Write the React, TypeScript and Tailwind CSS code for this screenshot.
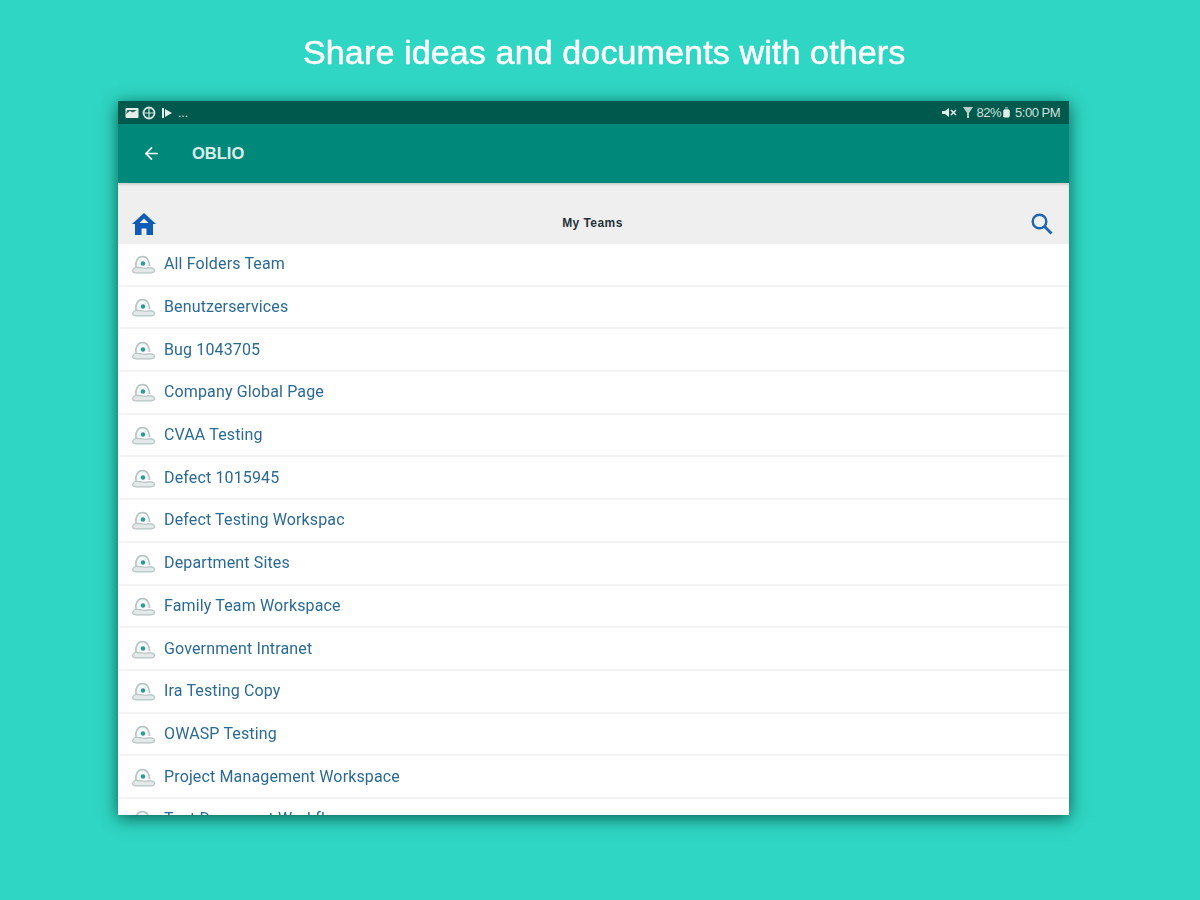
import { ArrowLeft, BatteryFull } from 'lucide-react';

const TEAMS = [
  'All Folders Team',
  'Benutzerservices',
  'Bug 1043705',
  'Company Global Page',
  'CVAA Testing',
  'Defect 1015945',
  'Defect Testing Workspac',
  'Department Sites',
  'Family Team Workspace',
  'Government Intranet',
  'Ira Testing Copy',
  'OWASP Testing',
  'Project Management Workspace',
  'Test Document Workflow',
];

function TeamIcon() {
  return (
    <svg width="26" height="22" viewBox="0 0 26 22" fill="none" className="shrink-0">
      <path d="M6 14 C5 8 8 3.500 12.500 3.500 C17 3.500 19.500 8 19.500 13" stroke="#b7c3c4" strokeWidth="1.600" fill="#f4f7f7" />
      <path d="M3 16.500 C5 13.500 7 14.500 13 15 C18 15.500 22 13.500 24 16 C25.500 18.500 23.500 19.800 21 19.800 L6 19.800 C3 19.800 2 18.500 3 16.500 Z" fill="#e3e8e8" stroke="#b7c3c4" strokeWidth="1.200" />
      <circle cx="13" cy="10.500" r="2.200" fill="#2f9a8f" />
    </svg>
  );
}

function HomeIcon() {
  return (
    <svg width="24" height="22" viewBox="0 0 24 22" className="shrink-0">
      <path fillRule="evenodd" d="M12 0 L24 11 L21 11 L21 22 L14.500 22 L14.500 15.500 L9.500 15.500 L9.500 22 L3 22 L3 11 L0 11 Z M12 5.500 L7.500 10 L16.500 10 Z" fill="#0f5bb5" />
    </svg>
  );
}

function SearchIcon() {
  return (
    <svg width="22" height="22" viewBox="0 0 22 22" fill="none" className="shrink-0">
      <circle cx="8.500" cy="8.500" r="6.800" stroke="#1f66b0" strokeWidth="2.400" />
      <path d="M13.500 13.500 L20.500 20.500" stroke="#1f66b0" strokeWidth="2.800" />
    </svg>
  );
}

function StatusLeft() {
  return (
    <div className="flex items-center gap-[3px]">
      <svg width="14" height="12" viewBox="0 0 14 12">
        <rect x="0.500" y="1" width="13" height="10" rx="1" fill="#e4efec" />
        <path d="M1 7 L5 4 L8 5.500 L12 3 L2 3 Z" fill="#2f6a5f" />
      </svg>
      <svg width="14" height="14" viewBox="0 0 14 14">
        <circle cx="7" cy="7" r="5.500" fill="none" stroke="#d5e3e0" strokeWidth="1.800" />
        <path d="M7 1.500 L7 12.500 M1.500 7 L12.500 7" stroke="#d5e3e0" strokeWidth="1.200" />
      </svg>
      <svg width="12" height="12" viewBox="0 0 12 12" className="ml-[2px]">
        <path d="M1 1 L3 1 L3 11 L1 11 Z M4 2 L11 6 L4 10 Z" fill="#e4efec" />
      </svg>
      <span className="ml-[2px] text-[12px] leading-none text-[#d5e3e0]">...</span>
    </div>
  );
}

function StatusRight() {
  return (
    <div className="flex items-center text-[13px] tracking-[-0.5px] text-[#d0e0dd]">
      <svg width="15" height="11" viewBox="0 0 15 11" className="mr-[6px]">
        <path d="M0 4 L3 4 L7 1 L7 10 L3 7 L0 7 Z" fill="#e4efec" />
        <path d="M9 3 L14 8 M14 3 L9 8" stroke="#e4efec" strokeWidth="1.500" />
      </svg>
      <svg width="10" height="13" viewBox="0 0 10 13" className="mr-[4px]">
        <path d="M0 1 L10 1 L6 7 L6 12 L4 12 L4 7 Z" fill="#b8ccc8" />
      </svg>
      <span>82%</span>
      <BatteryFull size={11} className="-rotate-90 fill-[#e4efec] text-[#e4efec]" />
      <span className="ml-[3px]">5:00 PM</span>
    </div>
  );
}

export default function App() {
  return (
    <div className="h-[900px] w-[1200px] overflow-hidden bg-[#2fd6c3] font-['Liberation_Sans',sans-serif]">
      <h1 className="ml-[303px] h-[101px] whitespace-nowrap pt-[31px] text-[34px] leading-[42px] tracking-[0.14px] text-white blur-[0.4px] [-webkit-text-stroke:0.5px_white]">
        Share ideas and documents with others
      </h1>

      <div className="ml-[118px] flex h-[714px] w-[951px] flex-col overflow-hidden bg-white shadow-[0_3px_16px_rgba(0,60,50,0.8)] blur-[0.5px]">
        <div className="flex h-[23px] shrink-0 items-center justify-between bg-[#00594d] pl-[7px] pr-[9px]">
          <StatusLeft />
          <StatusRight />
        </div>

        <div className="flex h-[59px] shrink-0 items-center bg-[#00897b] pl-[24px] text-white">
          <ArrowLeft size={19} strokeWidth={2.2} />
          <span className="ml-[31px] text-[16.5px] font-bold text-[#dceeeb]">OBLIO</span>
        </div>

        <div className="flex h-[61px] shrink-0 items-end justify-between bg-[#eeefee] pb-[9px] pl-[14px] pr-[16px] shadow-[inset_0_2px_2px_rgba(0,0,0,0.12)]">
          <HomeIcon />
          <span className="mb-[3px] ml-[-2px] text-[12px] font-bold tracking-[0.45px] text-[#263238]">My Teams</span>
          <SearchIcon />
        </div>

        <ul className="font-['Roboto',sans-serif]">
          {TEAMS.map((team) => (
            <li key={team} className="flex h-[42.7px] items-center gap-[8px] border-b-2 border-[#f3f3f3] pl-[12px]">
              <TeamIcon />
              <span className="text-[16px] tracking-[0.14px] text-[#2b6a94]">{team}</span>
            </li>
          ))}
        </ul>
      </div>
    </div>
  );
}
